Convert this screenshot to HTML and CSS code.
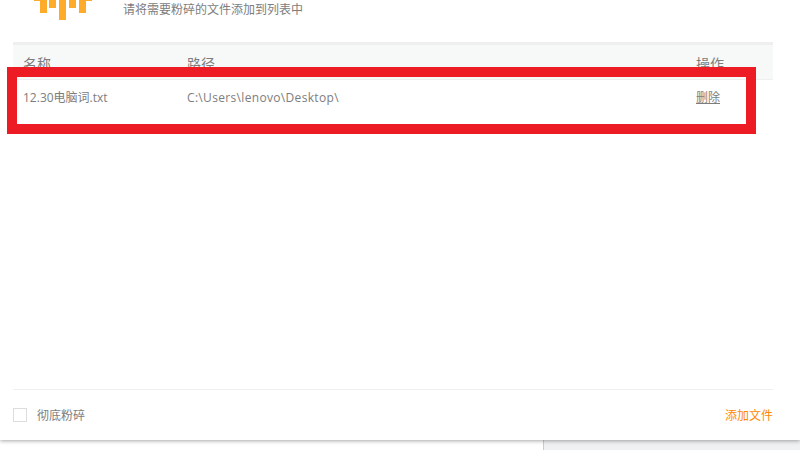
FILE: index.html
```html
<!DOCTYPE html>
<html lang="zh">
<head>
<meta charset="utf-8">
<title>文件粉碎</title>
<link rel="stylesheet" href="styles.css">
</head>
<body>
<div class="backdrop"><div class="backdrop-left"></div><div class="backdrop-right"></div></div>
<main class="panel">
  <header class="head">
    <svg class="logo" width="58" height="20" viewBox="0 0 58 20" aria-hidden="true">
      <g fill="#fdab29">
        <rect x="0" y="0" width="6" height="1"/>
        <rect x="6" y="0" width="7" height="13"/>
        <rect x="15" y="0" width="7" height="8"/>
        <rect x="25" y="0" width="7" height="20"/>
        <rect x="35" y="0" width="7" height="8"/>
        <rect x="45" y="0" width="7" height="13"/>
        <rect x="52" y="0" width="6" height="1"/>
      </g>
    </svg>
    <p class="hint">请将需要粉碎的文件添加到列表中</p>
  </header>
  <section class="table">
    <div class="row row-head">
      <span class="c-name">名称</span><span class="c-path">路径</span><span class="c-op">操作</span>
    </div>
    <div class="row row-body">
      <span class="c-name">12.30电脑词.txt</span><span class="c-path path-text">C:\Users\lenovo\Desktop\</span><span class="c-op"><a class="del" href="#">删除</a></span>
    </div>
  </section>
  <footer class="foot">
    <label class="check"><span class="box"></span>彻底粉碎</label>
    <a class="add" href="#">添加文件</a>
  </footer>
</main>
<div class="mark"></div>
</body>
</html>
```
FILE: styles.css
```css
* { box-sizing: border-box; }
html, body { margin: 0; height: 450px; overflow: hidden; }
body {
  position: relative;
  background: #fff;
  font-family: "Open Sans", "Noto Sans CJK SC", sans-serif;
  font-size: 12px;
  color: #7d7d7d;
}
.backdrop { position: absolute; inset: 0; display: flex; }
.backdrop-left { width: 543px; background: #fff; }
.backdrop-right { flex: 1; background: #f0f1f3; border-left: 1px solid #ccc; }
.panel {
  position: relative;
  width: 800px;
  height: 440px;
  background: #fff;
  box-shadow: 0 1px 4px rgba(0,0,0,.35);
  padding: 0 27px 0 13px;
  display: flex;
  flex-direction: column;
}
.head { height: 42px; position: relative; }
.logo { position: absolute; left: 21px; top: 0; }
.hint { margin: 0; position: absolute; left: 110px; top: 1px; line-height: 18px; }
.table { flex: 1; }
.row { display: flex; align-items: center; }
.row-head {
  height: 38px;
  background: #f7f8f8;
  border-top: 3px solid #efefef;
  border-bottom: 1px solid #efefef;
  font-size: 14px;
  padding-top: 2px;
}
.row-body { height: 34px; }
.c-name { width: 174px; padding-left: 10px; }
.c-path { flex: 1; }
.path-text { letter-spacing: .33px; }
.c-op { width: 77px; }
.del { color: #7d7d7d; text-decoration: underline; }
.foot {
  height: 51px;
  border-top: 1px solid #efefef;
  display: flex;
  align-items: center;
  justify-content: space-between;
}
.check { display: flex; align-items: center; gap: 10px; }
.box { width: 14px; height: 14px; border: 1px solid #ddd; background: #fff; }
.add { color: #ff8a00; text-decoration: none; }
.mark {
  position: absolute;
  left: 7px;
  top: 67px;
  width: 749px;
  height: 67px;
  border: 10px solid #ed1c24;
}
```
